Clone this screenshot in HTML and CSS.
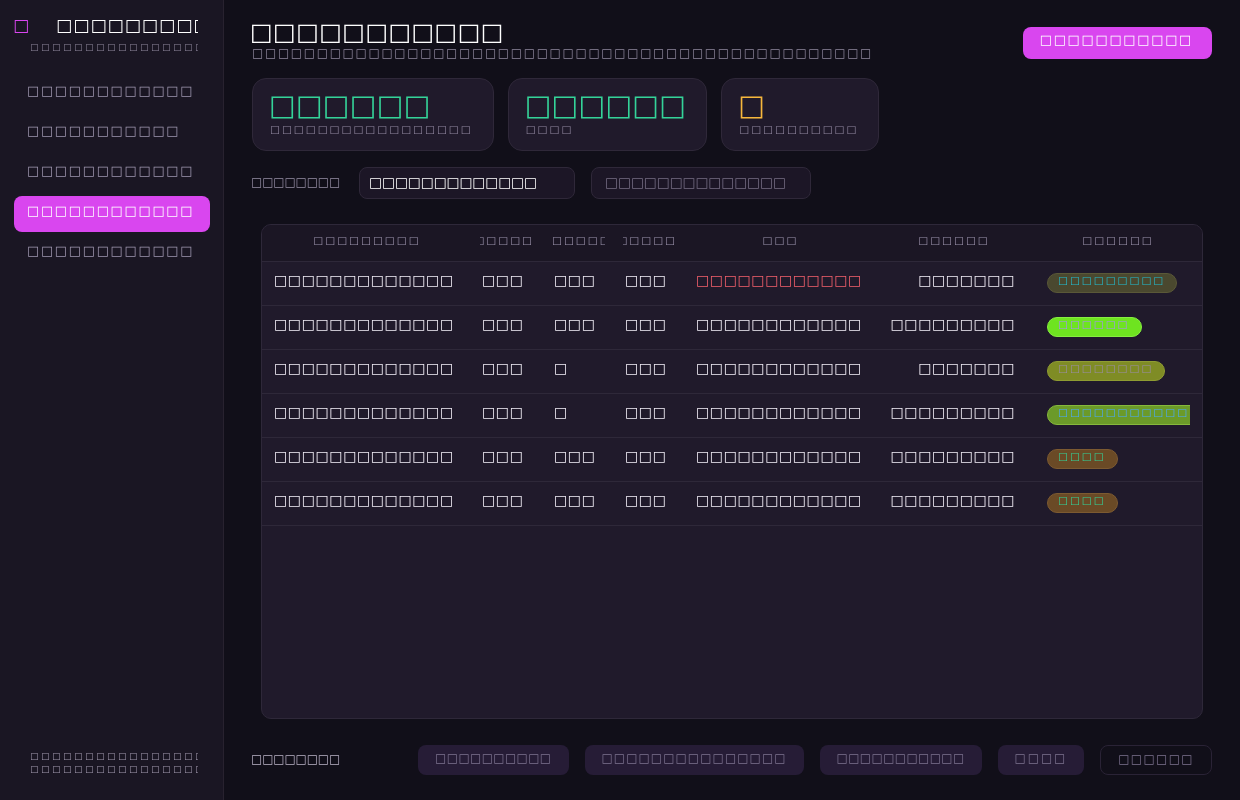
FILE: index.html
```html
<!DOCTYPE html>
<html lang="en">
<head>
    <meta charset="UTF-8">
    <meta name="viewport" content="width=device-width, initial-scale=1.0">
    <title>□□□□□□□□□□□</title>
    <link rel="stylesheet" href="styles.css">
</head>
<body>
<div class="app">
    <aside class="sidebar">
        <div class="brand">
            <span class="brand-mark">□</span>
            <span class="brand-name">□□□□□□□□□□□□</span>
        </div>
        <div class="brand-sub">□□□□□□□□□□□□□□□□□□</div>

        <nav class="nav">
            <a class="nav-item">□□□□□□□□□□□□</a>
            <a class="nav-item">□□□□□□□□□□□</a>
            <a class="nav-item">□□□□□□□□□□□□</a>
            <a class="nav-item active">□□□□□□□□□□□□</a>
            <a class="nav-item">□□□□□□□□□□□□</a>
        </nav>

        <div class="side-foot">
            <div>□□□□□□□□□□□□□□□□□□</div>
            <div>□□□□□□□□□□□□□□□□□□</div>
        </div>
    </aside>

    <main class="main">
        <header class="top">
            <div>
                <h1 class="title">□□□□□□□□□□□</h1>
                <p class="subtitle">□□□□□□□□□□□□□□□□□□□□□□□□□□□□□□□□□□□□□□□□□□□□□□□□</p>
            </div>
            <button class="primary">□□□□□□□□□□□</button>
        </header>

        <!-- summary cards -->
        <section class="stats">
            <div class="card">
                <div class="card-value">□□□□□□</div>
                <div class="card-label">□□□□□□□□□□□□□□□□□</div>
            </div>
            <div class="card">
                <div class="card-value">□□□□□□</div>
                <div class="card-label">□□□□</div>
            </div>
            <div class="card">
                <div class="card-value warn">□</div>
                <div class="card-label">□□□□□□□□□□</div>
            </div>
        </section>

        <div class="filters">
            <span class="filter-label">□□□□□□□□</span>
            <input class="field" type="text" value="□□□□□□□□□□□□□">
            <input class="field field-wide" type="text" placeholder="□□□□□□□□□□□□□□">
        </div>

        <div class="table-wrap">
            <table class="grid">
                <colgroup>
                    <col class="c-name"><col class="c-num"><col class="c-num2"><col class="c-num">
                    <col class="c-path"><col class="c-date"><col class="c-status">
                </colgroup>
                <thead>
                    <tr>
                        <th><div class="th-in center"><span>□□□□□□□□□</span></div></th>
                        <th><div class="th-in end"><span>□□□□□</span></div></th>
                        <th><div class="th-in"><span>□□□□□</span></div></th>
                        <th><div class="th-in end"><span>□□□□□</span></div></th>
                        <th><div class="th-in center"><span>□□□</span></div></th>
                        <th><div class="th-in center"><span>□□□□□□</span></div></th>
                        <th><div class="th-in center"><span>□□□□□□</span></div></th>
                    </tr>
                </thead>
                <tbody>
                    <tr>
                        <td>□□□□□□□□□□□□□</td><td>□□□</td><td>□□□</td><td>□□□</td>
                        <td class="path error">□□□□□□□□□□□□</td><td class="date">□□□□□□□</td>
                        <td class="status"><div class="clip"><span class="badge b-olive">□□□□□□□□□</span></div></td>
                    </tr>
                    <tr>
                        <td>□□□□□□□□□□□□□</td><td>□□□</td><td>□□□</td><td>□□□</td>
                        <td class="path">□□□□□□□□□□□□</td><td class="date">□□□□□□□□□</td>
                        <td class="status"><div class="clip"><span class="badge b-lime">□□□□□□</span></div></td>
                    </tr>
                    <tr>
                        <td>□□□□□□□□□□□□□</td><td>□□□</td><td>□</td><td>□□□</td>
                        <td class="path">□□□□□□□□□□□□</td><td class="date">□□□□□□□</td>
                        <td class="status"><div class="clip"><span class="badge b-moss">□□□□□□□□</span></div></td>
                    </tr>
                    <tr>
                        <td>□□□□□□□□□□□□□</td><td>□□□</td><td>□</td><td>□□□</td>
                        <td class="path">□□□□□□□□□□□□</td><td class="date">□□□□□□□□□</td>
                        <td class="status"><div class="clip"><span class="badge b-leaf">□□□□□□□□□□□□□</span></div></td>
                    </tr>
                    <tr>
                        <td>□□□□□□□□□□□□□</td><td>□□□</td><td>□□□</td><td>□□□</td>
                        <td class="path">□□□□□□□□□□□□</td><td class="date">□□□□□□□□□</td>
                        <td class="status"><div class="clip"><span class="badge b-rust">□□□□</span></div></td>
                    </tr>
                    <tr>
                        <td>□□□□□□□□□□□□□</td><td>□□□</td><td>□□□</td><td>□□□</td>
                        <td class="path">□□□□□□□□□□□□</td><td class="date">□□□□□□□□□</td>
                        <td class="status"><div class="clip"><span class="badge b-rust">□□□□</span></div></td>
                    </tr>
                </tbody>
            </table>
        </div>

        <footer class="pager">
            <span class="pager-label">□□□□□□□□</span>
            <div class="pager-actions">
                <button class="pill">□□□□□□□□□□</button>
                <button class="pill spaced">□□□□□□□□□□□□□□□</button>
                <button class="pill">□□□□□□□□□□□</button>
                <button class="pill loose">□□□□</button>
                <button class="pill ghost">□□□□□□</button>
            </div>
        </footer>
    </main>
</div>
</body>
</html>
```
FILE: styles.css
```css
/* dark violet theme */
:root {
    --bg: #110f19;
    --side: #1a1623;
    --panel: #201a2b;
    --panel-head: #1b1624;
    --line: #2e2839;
    --accent: #d946ef;
    --text: #f3eff8;
    --muted: #9a91aa;
    --dim: #8f879d;
    --green: #34d399;
    --amber: #f6b73c;
}

* {
    box-sizing: border-box;
}

body {
    margin: 0;
    background: var(--bg);
    color: var(--text);
    font-family: "DejaVu Sans", sans-serif;
    -webkit-font-smoothing: antialiased;
}

.app {
    display: flex;
    height: 100vh;
    will-change: transform;
}

/* sidebar */
.sidebar {
    flex: none;
    width: 224px;
    display: flex;
    flex-direction: column;
    padding: 0 13px 0 14px;
    background: var(--side);
    border-right: 1px solid #28222f;
}

.brand {
    display: flex;
    align-items: center;
    margin: 0 12px 0 -1px;
    padding-top: 13px;
    line-height: 24px;
    font-size: 17px;
}

.brand-mark {
    flex: none;
    margin-right: 27px;
    color: var(--accent);
}

.brand-name {
    flex: 1;
    min-width: 0;
    overflow: hidden;
    white-space: nowrap;
    letter-spacing: 1.1px;
    color: #fff;
}

.brand-sub,
.side-foot div {
    overflow: hidden;
    white-space: nowrap;
    font-size: 9px;
    line-height: 13px;
    letter-spacing: 2.5px;
    color: var(--dim);
}

.brand-sub {
    margin: 4px 12px 0 16px;
}

.nav {
    display: flex;
    flex-direction: column;
    gap: 4px;
    margin-top: 22px;
}

.nav-item {
    display: block;
    height: 36px;
    padding: 5px 13px 11px;
    border-radius: 8px;
    font-size: 13px;
    line-height: 20px;
    letter-spacing: 1.65px;
    white-space: nowrap;
    color: #a097b0;
    cursor: pointer;
}

.nav-item.active {
    background: var(--accent);
    color: #fff;
}

.side-foot {
    margin: auto 12px 0 16px;
    padding-bottom: 24px;
}

.side-foot div {
    color: #a39ab0;
}

/* main column */
.main {
    flex: 1;
    min-width: 0;
    display: flex;
    flex-direction: column;
    padding: 18px 28px 25px;
}

.top {
    display: flex;
    justify-content: space-between;
    align-items: flex-start;
}

.title {
    margin: 0 0 0 -2px;
    font-size: 24px;
    font-weight: normal;
    line-height: 28px;
    letter-spacing: 0.4px;
    color: #fff;
}

.subtitle {
    margin: 0;
    font-size: 12px;
    line-height: 14px;
    letter-spacing: 1.6px;
    white-space: nowrap;
    color: var(--dim);
}

.primary {
    height: 32px;
    margin-top: 9px;
    padding: 5px 19px 11px 17px;
    border: none;
    border-radius: 8px;
    background: var(--accent);
    color: #fff;
    font-family: inherit;
    font-size: 13px;
    line-height: 16px;
    letter-spacing: 1.65px;
}

.stats {
    display: flex;
    gap: 14px;
    align-items: flex-start;
    margin-top: 18px;
}

.card {
    padding: 12px 20px 14px 16px;
    background: var(--panel);
    border: 1px solid #2f2839;
    border-radius: 14px;
}

.card-value {
    font-size: 28.5px;
    line-height: 30px;
    color: var(--green);
    white-space: nowrap;
}

.card-value.warn {
    color: var(--amber);
}

.card-label {
    margin-top: 1px;
    padding-left: 1px;
    font-size: 10.5px;
    line-height: 14px;
    letter-spacing: 2px;
    white-space: nowrap;
    color: #9188a0;
}

.filters {
    display: flex;
    align-items: center;
    gap: 16px;
    margin-top: 16px;
}

.filter-label,
.pager-label {
    margin: 0 3px 0 -1px;
    padding-bottom: 2px;
    font-size: 12px;
    letter-spacing: -0.2px;
    color: #958da4;
}

.field {
    width: 216px;
    height: 32px;
    padding: 0 9px 2px;
    background: #1c1626;
    border: 1px solid #2f2839;
    border-radius: 8px;
    color: #fff;
    font-family: inherit;
    font-size: 13.5px;
    letter-spacing: 0.15px;
    outline: none;
}

.field-wide {
    width: 220px;
    padding-left: 13px;
}

.field::placeholder {
    color: #756d84;
}

/* table */
.table-wrap {
    flex: 1;
    margin: 25px 9px 0;
    background: var(--panel);
    border: 1px solid var(--line);
    border-radius: 10px;
    overflow: hidden;
}

.grid {
    width: 100%;
    table-layout: fixed;
    border-collapse: separate;
    border-spacing: 0;
}

.c-name { width: 208px; }
.c-num { width: 72px; }
.c-num2 { width: 71px; }
.c-path { width: 189px; }
.c-date { width: 158px; }
.c-status { width: 170px; }

.grid th {
    padding: 8px 8px 14px 10px;
    background: var(--panel-head);
    border-bottom: 1px solid var(--line);
    font-weight: normal;
    font-size: 10.5px;
    line-height: 14px;
    letter-spacing: 2px;
    color: #9d94ad;
}

.th-in {
    display: flex;
    overflow: hidden;
    white-space: nowrap;
}

.th-in span {
    flex: none;
}

.th-in.center {
    justify-content: center;
}

.th-in.end {
    justify-content: flex-end;
}

.grid td {
    padding: 9px 12px 16px;
    border-bottom: 1px solid var(--line);
    vertical-align: top;
    font-size: 14px;
    line-height: 18px;
    letter-spacing: 0.6px;
    white-space: nowrap;
    overflow: hidden;
}

.grid td.path {
    padding-left: 11px;
}

.grid td.error {
    color: #f4606c;
}

.grid td.date {
    padding-right: 17px;
    text-align: right;
}

.grid td.status {
    padding: 11px 12px 12px 15px;
}

.clip {
    display: flex;
    overflow: hidden;
}

.badge {
    flex: none;
    height: 20px;
    padding: 0 11px 5px 10px;
    border: 1px solid;
    border-radius: 10px;
    font-size: 10.5px;
    line-height: 13px;
    letter-spacing: 2px;
}

.b-olive { background: #4a482f; border-color: #5a5838; color: #22bfd3; }
.b-lime { background: #6ee420; border-color: #86ef40; color: #a78bfa; }
.b-moss { background: #7f8c25; border-color: #8f9c32; color: #9a8ea8; }
.b-leaf { background: #6b9a29; border-color: #86b83c; color: #4aa8ff; }
.b-rust { background: #6a4a26; border-color: #7c5a31; color: #34d399; }

/* footer */
.pager {
    display: flex;
    justify-content: space-between;
    align-items: center;
    margin-top: 26px;
}

.pager-label {
    padding-bottom: 3px;
    color: #bab2c6;
}

.pager-actions {
    display: flex;
    gap: 16px;
}

.pill {
    height: 30px;
    padding: 5px 17px 9px;
    background: #261c36;
    border: none;
    border-radius: 8px;
    color: #7d7390;
    font-family: inherit;
    font-size: 12px;
    line-height: 16px;
    letter-spacing: 0.3px;
}

.pill.spaced {
    letter-spacing: 1px;
}

.pill.loose {
    letter-spacing: 1.8px;
}

.pill.ghost {
    background: transparent;
    border: 1px solid #2a2336;
    letter-spacing: 1.3px;
}
```
